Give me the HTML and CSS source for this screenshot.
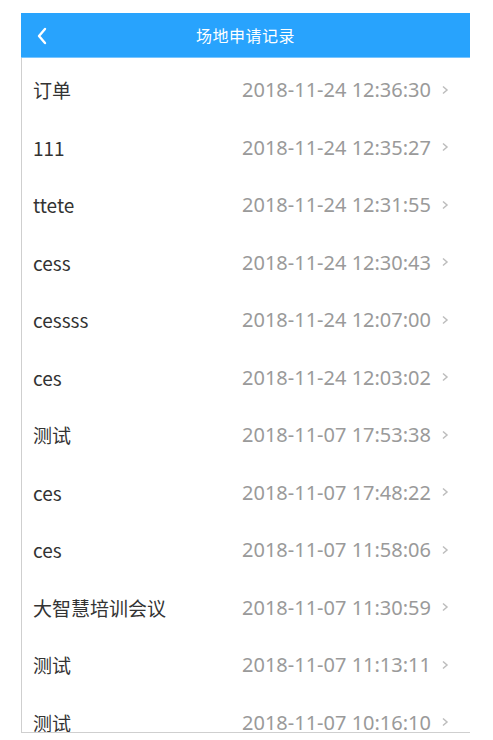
FILE: index.html
```html
<!DOCTYPE html>
<html lang="zh-CN">
<head>
<meta charset="utf-8">
<title>场地申请记录</title>
<link rel="stylesheet" href="styles.css">
</head>
<body>
<div class="frame">
  <header class="bar">
    <svg class="back" width="12" height="18" viewBox="0 0 12 18"><polyline points="9,2 3,9 9,16" fill="none" stroke="#fff" stroke-width="2.4" stroke-linecap="round" stroke-linejoin="round"/></svg>
    <h1 class="title">场地申请记录</h1>
  </header>
  <ul class="list">
    <li class="row"><span class="name">订单</span><span class="time">2018-11-24 12:36:30</span><svg class="chev" width="8" height="12" viewBox="0 0 8 12"><polyline points="2,2.5 6,6 2,9.5" fill="none" stroke="#bdbdbd" stroke-width="1.5"/></svg></li>
    <li class="row"><span class="name">111</span><span class="time">2018-11-24 12:35:27</span><svg class="chev" width="8" height="12" viewBox="0 0 8 12"><polyline points="2,2.5 6,6 2,9.5" fill="none" stroke="#bdbdbd" stroke-width="1.5"/></svg></li>
    <li class="row"><span class="name">ttete</span><span class="time">2018-11-24 12:31:55</span><svg class="chev" width="8" height="12" viewBox="0 0 8 12"><polyline points="2,2.5 6,6 2,9.5" fill="none" stroke="#bdbdbd" stroke-width="1.5"/></svg></li>
    <li class="row"><span class="name">cess</span><span class="time">2018-11-24 12:30:43</span><svg class="chev" width="8" height="12" viewBox="0 0 8 12"><polyline points="2,2.5 6,6 2,9.5" fill="none" stroke="#bdbdbd" stroke-width="1.5"/></svg></li>
    <li class="row"><span class="name">cessss</span><span class="time">2018-11-24 12:07:00</span><svg class="chev" width="8" height="12" viewBox="0 0 8 12"><polyline points="2,2.5 6,6 2,9.5" fill="none" stroke="#bdbdbd" stroke-width="1.5"/></svg></li>
    <li class="row"><span class="name">ces</span><span class="time">2018-11-24 12:03:02</span><svg class="chev" width="8" height="12" viewBox="0 0 8 12"><polyline points="2,2.5 6,6 2,9.5" fill="none" stroke="#bdbdbd" stroke-width="1.5"/></svg></li>
    <li class="row"><span class="name">测试</span><span class="time">2018-11-07 17:53:38</span><svg class="chev" width="8" height="12" viewBox="0 0 8 12"><polyline points="2,2.5 6,6 2,9.5" fill="none" stroke="#bdbdbd" stroke-width="1.5"/></svg></li>
    <li class="row"><span class="name">ces</span><span class="time">2018-11-07 17:48:22</span><svg class="chev" width="8" height="12" viewBox="0 0 8 12"><polyline points="2,2.5 6,6 2,9.5" fill="none" stroke="#bdbdbd" stroke-width="1.5"/></svg></li>
    <li class="row"><span class="name">ces</span><span class="time">2018-11-07 11:58:06</span><svg class="chev" width="8" height="12" viewBox="0 0 8 12"><polyline points="2,2.5 6,6 2,9.5" fill="none" stroke="#bdbdbd" stroke-width="1.5"/></svg></li>
    <li class="row"><span class="name">大智慧培训会议</span><span class="time">2018-11-07 11:30:59</span><svg class="chev" width="8" height="12" viewBox="0 0 8 12"><polyline points="2,2.5 6,6 2,9.5" fill="none" stroke="#bdbdbd" stroke-width="1.5"/></svg></li>
    <li class="row"><span class="name">测试</span><span class="time">2018-11-07 11:13:11</span><svg class="chev" width="8" height="12" viewBox="0 0 8 12"><polyline points="2,2.5 6,6 2,9.5" fill="none" stroke="#bdbdbd" stroke-width="1.5"/></svg></li>
    <li class="row"><span class="name">测试</span><span class="time">2018-11-07 10:16:10</span><svg class="chev" width="8" height="12" viewBox="0 0 8 12"><polyline points="2,2.5 6,6 2,9.5" fill="none" stroke="#bdbdbd" stroke-width="1.5"/></svg></li>
  </ul>
</div>
</body>
</html>
```

FILE: styles.css
```css
html, body {
  margin: 0;
  padding: 0;
  background: #fff;
}
body {
  font-family: "Noto Sans", "Noto Sans CJK SC", sans-serif;
}
.frame {
  margin: 13px 0 0 21px;
  width: 449px;
  height: 720px;
  display: flex;
  flex-direction: column;
}
.bar {
  height: 44px;
  flex: none;
  background: #28a3fd;
  border-bottom: 1px solid #79c5ff;
  display: flex;
  align-items: center;
  justify-content: center;
  position: relative;
}
.back {
  position: absolute;
  left: 15px;
  top: 14px;
}
.title {
  margin: 0;
  font-size: 16px;
  font-weight: normal;
  color: #fff;
  font-family: "Noto Sans CJK SC", sans-serif;
  letter-spacing: 0.5px;
}
.list {
  list-style: none;
  margin: 0;
  padding: 3px 0 0 0;
  flex: 1;
  overflow: hidden;
  border-left: 1px solid #cfcfcf;
  border-bottom: 1px solid #cfcfcf;
}
.row {
  height: 57.5px;
  display: flex;
  align-items: center;
  padding: 0 21px 0 11px;
}
.name {
  flex: 1;
  font-size: 19px;
  color: #333;
  font-family: "Noto Sans CJK SC", sans-serif;
}
.time {
  font-size: 20px;
  color: #9a9a9a;
}
.chev {
  margin-left: 10px;
  flex: none;
}
```
